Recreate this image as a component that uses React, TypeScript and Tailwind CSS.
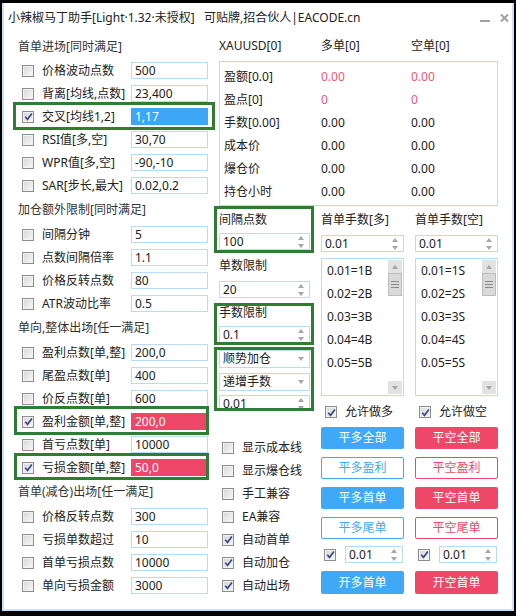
import { Fragment } from 'react'

type Row = { label: string; value: string; on?: boolean; fill?: 'blue' | 'red'; mark?: string }

const sections: { title: string; head: string; rows: Row[] }[] = [
  {
    title: '首单进场[同时满足]',
    head: 'h-[24px]',
    rows: [
      { label: '价格波动点数', value: '500' },
      { label: '背离[均线,点数]', value: '23,400' },
      { label: '交叉[均线1,2]', value: '1,17', on: true, fill: 'blue', mark: 'left-[9px] w-[202px] -top-[3px] -bottom-[2px]' },
      { label: 'RSI值[多,空]', value: '30,70' },
      { label: 'WPR值[多,空]', value: '-90,-10' },
      { label: 'SAR[步长,最大]', value: '0.02,0.2' },
    ],
  },
  {
    title: '加仓额外限制[同时满足]',
    head: 'h-[26px]',
    rows: [
      { label: '间隔分钟', value: '5' },
      { label: '点数间隔倍率', value: '1.1' },
      { label: '价格反转点数', value: '80' },
      { label: 'ATR波动比率', value: '0.5' },
    ],
  },
  {
    title: '单向,整体出场[任一满足]',
    head: 'h-[26px]',
    rows: [
      { label: '盈利点数[单,整]', value: '200,0' },
      { label: '尾盈点数[单]', value: '400' },
      { label: '价反点数[单]', value: '600' },
      { label: '盈利金额[单,整]', value: '200,0', on: true, fill: 'red', mark: 'left-[10px] w-[195px] -top-[4px] -bottom-[2px]' },
      { label: '首亏点数[单]', value: '10000' },
      { label: '亏损金额[单,整]', value: '50,0', on: true, fill: 'red', mark: 'left-[10px] w-[195px] -top-[3px] -bottom-[1px]' },
    ],
  },
  {
    title: '首单(减仓)出场[任一满足]',
    head: 'h-[26px]',
    rows: [
      { label: '价格反转点数', value: '300' },
      { label: '亏损单数超过', value: '10' },
      { label: '首单亏损点数', value: '10000' },
      { label: '单向亏损金额', value: '3000' },
    ],
  },
]

const stats = [
  ['盈额[0.0]', '0.00', '0.00', true],
  ['盈点[0]', '0', '0', true],
  ['手数[0.00]', '0.00', '0.00', false],
  ['成本价', '0.00', '0.00', false],
  ['爆仓价', '0.00', '0.00', false],
  ['持仓小时', '0.00', '0.00', false],
] as const

const toggles: [string, boolean][] = [
  ['显示成本线', false],
  ['显示爆仓线', false],
  ['手工兼容', false],
  ['EA兼容', false],
  ['自动首单', true],
  ['自动加仓', true],
  ['自动出场', true],
]

function Box({ on }: { on?: boolean }) {
  return (
    <span className="flex h-[12px] w-[12px] shrink-0 items-center justify-center border border-[#8d8d8d] bg-gradient-to-br from-[#d6d6d6] to-[#f9f9f9] shadow-[inset_0_0_0_1px_#f2f2f2]">
      {on && (
        <svg viewBox="0 0 10 10" className="h-[9px] w-[9px]">
          <path d="M1.4 5.3 L3.9 8.2 L8.8 1.6" fill="none" stroke="#3a4b8c" strokeWidth="1.9" />
        </svg>
      )}
    </span>
  )
}

function Up() {
  return <span className="block h-0 w-0 border-x-[3.5px] border-b-[4px] border-x-transparent border-b-[#a6a6a6]" />
}

function Down() {
  return <span className="block h-0 w-0 border-x-[3.5px] border-t-[4px] border-x-transparent border-t-[#a6a6a6]" />
}

function Spin({ value, className = '' }: { value: string; className?: string }) {
  return (
    <div className={`flex h-[17px] shrink-0 items-center border border-[#b8dcf7] bg-white pl-[3px] ${className}`}>
      <span className="leading-none">{value}</span>
      <span className="ml-auto mr-[5px] flex flex-col gap-[4px]">
        <Up />
        <Down />
      </span>
    </div>
  )
}

function Drop({ value, className = '' }: { value: string; className?: string }) {
  return (
    <div className={`flex h-[18px] w-[91px] shrink-0 items-center border border-[#b8dcf7] bg-white pl-[3px] ${className}`}>
      <span className="leading-none">{value}</span>
      <span className="ml-auto mr-[5px] flex">
        <Down />
      </span>
    </div>
  )
}

function Lots({ side, tag }: { side: string; tag: string }) {
  return (
    <>
      <div className="flex h-[27px] items-center">首单手数[{side}]</div>
      <Spin value="0.01" className="mt-[2px] w-[83px]" />
      <div className="mt-[6px] flex h-[138px] border border-[#b8dcf7] bg-white">
        <div className="flex-1 pl-[5px]">
          {[1, 2, 3, 4, 5].map((n) => (
            <div key={n} className="flex h-[23px] items-center">
              0.0{n}={n}
              {tag}
            </div>
          ))}
        </div>
        <div className="my-[1px] mr-[1px] flex w-[14px] flex-col">
          <div className="flex h-[13px] items-center justify-center bg-[#e2e2e2]">
            <Up />
          </div>
          <div className="flex h-[23px] flex-col items-center justify-center gap-[2px] border border-[#bcbcbc] bg-[#d9d9d9]">
            <span className="h-px w-[8px] bg-[#8a8a8a]" />
            <span className="h-px w-[8px] bg-[#8a8a8a]" />
            <span className="h-px w-[8px] bg-[#8a8a8a]" />
          </div>
          <div className="flex-1" />
          <div className="flex h-[13px] items-center justify-center bg-[#e2e2e2]">
            <Down />
          </div>
        </div>
      </div>
    </>
  )
}

function Trade({ dir, tag, allow, fill, line }: { dir: string; tag: string; allow: string; fill: string; line: string }) {
  const solid = `flex h-[22px] items-center justify-center rounded-[2px] ${fill} text-white`
  const ghost = `flex h-[22px] items-center justify-center rounded-[2px] border bg-white ${line}`
  return (
    <div className="flex w-[83px] flex-col">
      <Lots side={dir} tag={tag} />
      <div className="mt-[4px] flex h-[24px] items-center pl-[4px]">
        <Box on />
        <span className="ml-[8px]">{allow}</span>
      </div>
      <div className={`mt-[3px] ${solid}`}>平{dir}全部</div>
      <div className={`mt-[8px] ${ghost}`}>平{dir}盈利</div>
      <div className={`mt-[8px] ${solid}`}>平{dir}首单</div>
      <div className={`mt-[8px] ${ghost}`}>平{dir}尾单</div>
      <div className="mt-[7px] flex items-center">
        <span className="ml-[3px]">
          <Box on />
        </span>
        <Spin value="0.01" className="ml-[9px] w-[58px]" />
      </div>
      <div className={`mt-[8px] h-[23px] ${solid}`}>开{dir}首单</div>
    </div>
  )
}

export default function App() {
  return (
    <div className="h-[616px] w-[516px] overflow-hidden bg-black pl-[2px] pt-[3px] font-['Noto_Sans','Noto_Sans_CJK_SC',sans-serif] text-[12px] text-[#222]">
      <div className="flex h-[608px] w-[512px] flex-col border-x-2 border-b-2 border-[#c6e3f9] bg-white">
        <div className="flex h-[30px] shrink-0 items-center pl-[4px]">
          <span className="whitespace-pre">小辣椒马丁助手[Light·1.32·未授权]   可贴牌,招合伙人|EACODE.cn</span>
          <span className="ml-auto mt-[6px] h-[2px] w-[10px] bg-[#a0a0a0]" />
          <svg viewBox="0 0 9 8" className="ml-[10px] mr-[3px] h-[8px] w-[9px]">
            <path d="M1 0.5 L8 7.5 M8 0.5 L1 7.5" stroke="#a0a0a0" strokeWidth="2" />
          </svg>
        </div>

        <div className="flex flex-1">
          <div className="flex w-[209px] shrink-0 flex-col pt-[2px]">
            {sections.map((s) => (
              <Fragment key={s.title}>
                <div className={`flex ${s.head} items-center pl-[14px] text-[#333]`}>{s.title}</div>
                {s.rows.map((r) => (
                  <div key={r.label} className="relative flex h-[23px] items-center">
                    <span className="ml-[18px]">
                      <Box on={r.on} />
                    </span>
                    <span className="ml-[8px] w-[89px] whitespace-nowrap">{r.label}</span>
                    <span
                      className={`flex h-[17px] w-[77px] items-center border pl-[3px] leading-none ${
                        r.fill === 'blue'
                          ? 'border-[#3ca6f7] bg-[#3ca6f7] text-white'
                          : r.fill === 'red'
                            ? 'border-[#ee4667] bg-[#ee4667] text-white'
                            : 'border-[#b8dcf7] bg-white'
                      }`}
                    >
                      {r.value}
                    </span>
                    {r.mark && <span className={`pointer-events-none absolute border-[3px] border-[#2e7d32] ${r.mark}`} />}
                  </div>
                ))}
              </Fragment>
            ))}
          </div>

          <div className="flex flex-1 flex-col">
            <div className="flex h-[26px] items-center pl-[6px]">
              <span className="w-[102px]">XAUUSD[0]</span>
              <span className="w-[90px]">多单[0]</span>
              <span>空单[0]</span>
            </div>
            <div className="ml-[6px] mt-[2px] h-[145px] w-[279px] border border-[#b8dcf7] pl-[4px] pt-[3px]">
              {stats.map(([k, a, b, hot]) => (
                <div key={k} className="flex h-[23px] items-center">
                  <span className="w-[97px]">{k}</span>
                  <span className={`w-[90px] ${hot ? 'text-[#f0557a]' : ''}`}>{a}</span>
                  <span className={hot ? 'text-[#f0557a]' : ''}>{b}</span>
                </div>
              ))}
            </div>

            <div className="ml-[1px] flex">
              <div className="flex w-[100px] shrink-0 flex-col">
                <div className="h-[47px] overflow-hidden border-[3px] border-[#2e7d32]">
                  <div className="flex h-[22px] items-center pl-[2px]">间隔点数</div>
                  <Spin value="100" className="ml-[2px] mt-[2px] w-[91px]" />
                </div>
                <div className="flex h-[26px] items-center pl-[5px]">单数限制</div>
                <Spin value="20" className="ml-[5px] mt-[2px] w-[91px]" />
                <div className="mt-[5px] h-[42px] overflow-hidden border-[3px] border-[#2e7d32]">
                  <div className="flex h-[14px] items-center pl-[2px]">手数限制</div>
                  <Spin value="0.1" className="ml-[2px] mt-[6px] w-[91px]" />
                </div>
                <div className="mt-[2px] h-[64px] overflow-hidden border-[3px] border-[#2e7d32]">
                  <Drop value="顺势加仓" className="ml-[2px]" />
                  <Drop value="递增手数" className="ml-[2px] mt-[5px]" />
                  <Spin value="0.01" className="ml-[2px] mt-[4px] w-[91px]" />
                </div>
                <div className="mt-[25px]">
                  {toggles.map(([t, on]) => (
                    <div key={t} className="flex h-[23px] items-center pl-[8px]">
                      <Box on={on} />
                      <span className="ml-[8px]">{t}</span>
                    </div>
                  ))}
                </div>
              </div>

              <div className="ml-[7px]">
                <Trade dir="多" tag="B" allow="允许做多" fill="bg-[#3fa9f7]" line="border-[#3fa9f7] text-[#3fa9f7]" />
              </div>
              <div className="ml-[11px]">
                <Trade dir="空" tag="S" allow="允许做空" fill="bg-[#ef4767]" line="border-[#ef4767] text-[#ef4767]" />
              </div>
            </div>
          </div>
        </div>
      </div>
    </div>
  )
}
